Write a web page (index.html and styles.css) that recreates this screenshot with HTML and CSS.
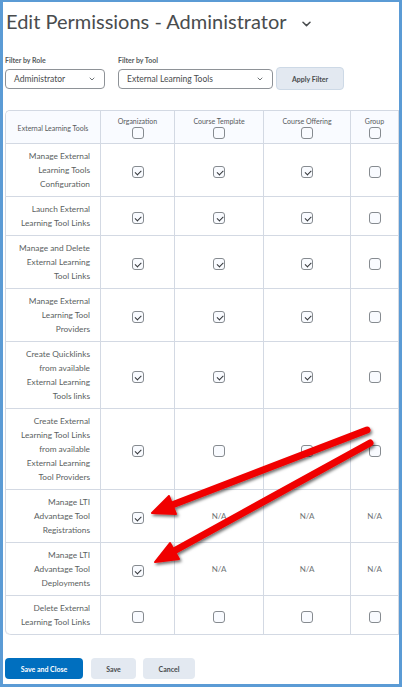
FILE: index.html
```html
<!DOCTYPE html>
<html lang="en">
<head>
<meta charset="utf-8">
<title>Edit Permissions - Administrator</title>
<link rel="stylesheet" href="styles.css">
</head>
<body>
<div class="frame">
  <h1 class="title">Edit Permissions - Administrator
    <svg class="title-chev" width="9" height="6" viewBox="0 0 9 6"><path d="M1 1.2 L4.5 4.6 L8 1.2" fill="none" stroke="#494c4e" stroke-width="1.5" stroke-linecap="round" stroke-linejoin="round"/></svg>
  </h1>

  <div class="filters">
    <div class="field">
      <span class="label">Filter by Role</span>
      <div class="select role">Administrator
        <svg width="6" height="4" viewBox="0 0 6 4"><path d="M1 1 L3 3 L5 1" fill="none" stroke="#6e7376" stroke-width="1" stroke-linecap="round"/></svg>
      </div>
    </div>
    <div class="field">
      <span class="label">Filter by Tool</span>
      <div class="select tool">External Learning Tools
        <svg width="6" height="4" viewBox="0 0 6 4"><path d="M1 1 L3 3 L5 1" fill="none" stroke="#6e7376" stroke-width="1" stroke-linecap="round"/></svg>
      </div>
    </div>
    <button class="btn apply">Apply Filter</button>
  </div>

  <table class="perms">
    <thead>
      <tr>
        <th class="c-name">External Learning Tools</th>
        <th class="c-org"><span class="hlabel">Organization</span><span class="cb"></span></th>
        <th class="c-tpl"><span class="hlabel">Course Template</span><span class="cb"></span></th>
        <th class="c-off"><span class="hlabel">Course Offering</span><span class="cb"></span></th>
        <th class="c-grp"><span class="hlabel">Group</span><span class="cb"></span></th>
      </tr>
    </thead>
    <tbody>
      <tr>
        <td class="name">Manage External Learning Tools Configuration</td>
        <td><span class="cb on"></span></td><td><span class="cb on"></span></td><td><span class="cb on"></span></td><td><span class="cb"></span></td>
      </tr>
      <tr>
        <td class="name">Launch External Learning Tool Links</td>
        <td><span class="cb on"></span></td><td><span class="cb on"></span></td><td><span class="cb on"></span></td><td><span class="cb"></span></td>
      </tr>
      <tr>
        <td class="name">Manage and Delete External Learning Tool Links</td>
        <td><span class="cb on"></span></td><td><span class="cb on"></span></td><td><span class="cb on"></span></td><td><span class="cb"></span></td>
      </tr>
      <tr>
        <td class="name">Manage External Learning Tool Providers</td>
        <td><span class="cb on"></span></td><td><span class="cb on"></span></td><td><span class="cb on"></span></td><td><span class="cb"></span></td>
      </tr>
      <tr>
        <td class="name">Create Quicklinks from available External Learning Tools links</td>
        <td><span class="cb on"></span></td><td><span class="cb on"></span></td><td><span class="cb on"></span></td><td><span class="cb"></span></td>
      </tr>
      <tr>
        <td class="name">Create External Learning Tool Links from available External Learning Tool Providers</td>
        <td><span class="cb on"></span></td><td><span class="cb"></span></td><td><span class="cb"></span></td><td><span class="cb"></span></td>
      </tr>
      <tr>
        <td class="name">Manage LTI Advantage Tool Registrations</td>
        <td><span class="cb on"></span></td><td class="na">N/A</td><td class="na">N/A</td><td class="na">N/A</td>
      </tr>
      <tr>
        <td class="name">Manage LTI Advantage Tool Deployments</td>
        <td><span class="cb on"></span></td><td class="na">N/A</td><td class="na">N/A</td><td class="na">N/A</td>
      </tr>
      <tr class="last">
        <td class="name">Delete External Learning Tool Links</td>
        <td><span class="cb"></span></td><td><span class="cb"></span></td><td><span class="cb"></span></td><td><span class="cb"></span></td>
      </tr>
    </tbody>
  </table>

  <div class="actions">
    <button class="btn primary">Save and Close</button>
    <button class="btn save">Save</button>
    <button class="btn cancel">Cancel</button>
  </div>

  <svg class="arrows" width="402" height="687" viewBox="0 0 402 687">
    <defs>
      <filter id="sh" x="-20%" y="-20%" width="140%" height="140%">
        <feDropShadow dx="1.5" dy="2" stdDeviation="1.5" flood-color="#000" flood-opacity="0.55"/>
      </filter>
    </defs>
    <g filter="url(#sh)" fill="#f00000" stroke="#f00000">
      <line x1="367" y1="430" x2="172" y2="505" stroke-width="7" stroke-linecap="round"/>
      <polygon points="152,513 176,514 169,496" stroke-width="2" stroke-linejoin="round"/>
      <line x1="370" y1="443" x2="174" y2="551" stroke-width="7" stroke-linecap="round"/>
      <polygon points="155,562 179,559 170,543" stroke-width="2" stroke-linejoin="round"/>
    </g>
  </svg>
</div>
</body>
</html>
```

FILE: styles.css
```css
* { box-sizing: border-box; }
html, body { margin: 0; padding: 0; background: #fff; }
body {
  font-family: Lato, "Noto Sans", "Liberation Sans", sans-serif;
  color: #494c4e;
}

.frame {
  position: relative;
  width: 402px;
  height: 687px;
  border: 3px solid #5b9bd5;
  border-top-width: 2px;
  padding: 0 0 0 2px;
  overflow: hidden;
}

.title {
  display: flex;
  align-items: center;
  margin: 0;
  padding: 3px 0 0 1px;
  height: 34px;
  font-size: 20px;
  font-weight: 400;
  color: #494c4e;
  white-space: nowrap;
}
.title-chev { margin-left: 15px; margin-top: 6px; }

.filters {
  display: flex;
  align-items: flex-end;
  margin-top: 20px;
}
.field {
  display: flex;
  flex-direction: column;
  gap: 5px;
  margin-right: 13px;
}
.field:nth-child(2) { margin-right: 3px; }
.label {
  font-size: 7px;
  font-weight: 700;
  color: #565a5c;
  line-height: 8px;
}
.select {
  display: flex;
  align-items: center;
  justify-content: space-between;
  height: 20px;
  border: 1px solid #8e9297;
  border-radius: 4px;
  padding: 0 9px 0 8px;
  font-size: 8.5px;
  color: #494c4e;
}
.select.role { width: 100px; }
.select.tool { width: 155px; }

.btn {
  font-family: Lato, "Noto Sans", "Liberation Sans", sans-serif;
  font-size: 7px;
  font-weight: 700;
  border-radius: 4px;
  border: 1px solid transparent;
  padding: 0;
  color: #494c4e;
  background: #e3e9f1;
  cursor: pointer;
}
.apply {
  width: 68px;
  height: 23px;
  border-color: #cdd9e6;
  margin-bottom: -1px;
}

.perms {
  margin-top: 21px;
  width: 394px;
  table-layout: fixed;
  border-collapse: separate;
  border-spacing: 0;
  border-top: 1px solid #d3d9e3;
  border-left: 1px solid #d3d9e3;
  border-radius: 5px 0 0 5px;
}
.perms th, .perms td {
  border-right: 1px solid #d3d9e3;
  border-bottom: 1px solid #d3d9e3;
  padding: 5px 0;
  text-align: center;
  vertical-align: middle;
}
.perms th {
  background: #f9fbff;
  font-weight: 400;
  font-size: 7px;
  color: #565a5c;
  padding: 5px 0 4px;
}
.perms th.c-name { border-top-left-radius: 5px; }
.perms tr.last td:first-child { border-bottom-left-radius: 5px; }
.c-name { width: 95px; }
.c-org { width: 74px; }
.c-tpl { width: 89px; }
.c-off { width: 87px; }
.c-grp { width: 48px; }

.hlabel {
  display: block;
  line-height: 10px;
  margin-bottom: 1px;
}

.perms td.name {
  text-align: right;
  padding: 5px 10px 5px 9px;
  font-size: 8.3px;
  line-height: 14px;
  color: #5b5f62;
}
.perms td.na {
  font-size: 8px;
  color: #6e7376;
}

.cb {
  display: inline-block;
  position: relative;
  width: 12px;
  height: 12px;
  border: 1px solid #868b90;
  border-radius: 3px;
  background: #f9fbff;
  vertical-align: middle;
}
.cb.on::after {
  content: "";
  position: absolute;
  left: 2.5px;
  top: 2.2px;
  width: 5px;
  height: 2.6px;
  border-left: 1.8px solid #333639;
  border-bottom: 1.8px solid #333639;
  transform: rotate(-45deg);
}

.actions {
  display: flex;
  gap: 8px;
  margin-top: 23px;
}
.btn.primary {
  width: 78px;
  height: 21px;
  background: #006fbf;
  color: #fff;
}
.btn.save { width: 45px; height: 21px; }
.btn.cancel { width: 52px; height: 21px; margin-left: -1px; }

.arrows {
  position: absolute;
  left: -3px;
  top: -2px;
  pointer-events: none;
}
```
